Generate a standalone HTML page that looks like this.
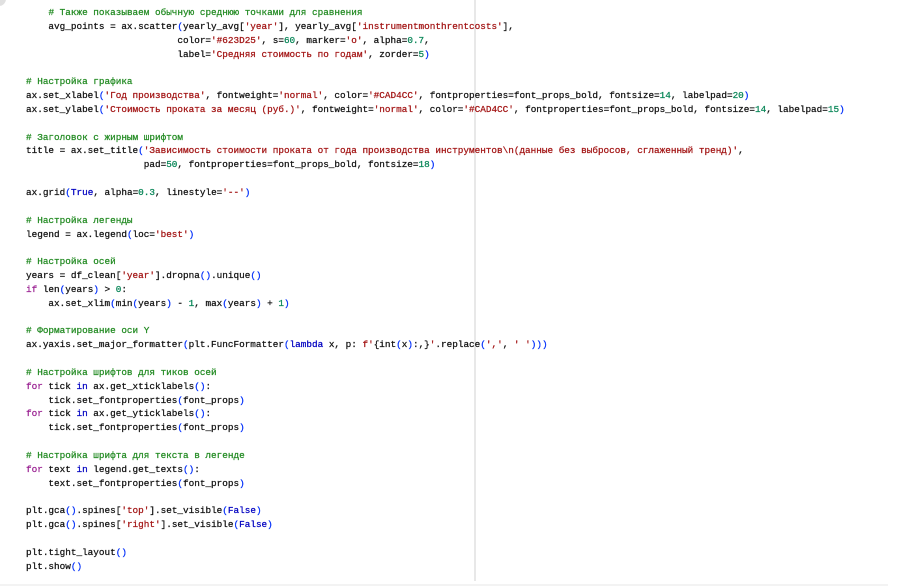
<!DOCTYPE html>
<html><head><meta charset="utf-8"><style>
html,body{margin:0;padding:0;background:#fff;width:900px;height:586px;overflow:hidden}
pre{position:absolute;left:26px;top:6px;margin:0;font-family:"Liberation Mono","DejaVu Sans Mono",monospace;font-size:9.35px;line-height:13.84px;color:#111;-webkit-text-stroke:0.25px currentColor}
.c{color:#238b23}
.s{color:#a31515}
.n{color:#098658}
.k{color:#9b2393}
.b{color:#0431fa}
.t{color:#0000c0}
.vl{position:absolute;left:474px;top:0;width:2px;height:581px;background:#e8e8e8}
.bot{position:absolute;left:0;top:584px;width:888px;height:2px;background:#f3f3f3}
.corner{position:absolute;left:-8px;top:-8px;width:14px;height:14px;border-radius:50%;background:#e0e0e0}
</style></head><body>
<div class="corner"></div>
<div class="vl"></div>
<div class="bot"></div>
<pre>    <span class="c"># Также показываем обычную среднюю точками для сравнения</span>
    avg_points = ax.scatter<span class="b">(</span>yearly_avg[<span class="s">'year'</span>], yearly_avg[<span class="s">'instrumentmonthrentcosts'</span>],
                           color=<span class="s">'#623D25'</span>, s=<span class="n">60</span>, marker=<span class="s">'o'</span>, alpha=<span class="n">0.7</span>,
                           label=<span class="s">'Средняя стоимость по годам'</span>, zorder=<span class="n">5</span><span class="b">)</span>

<span class="c"># Настройка графика</span>
ax.set_xlabel<span class="b">(</span><span class="s">'Год производства'</span>, fontweight=<span class="s">'normal'</span>, color=<span class="s">'#CAD4CC'</span>, fontproperties=font_props_bold, fontsize=<span class="n">14</span>, labelpad=<span class="n">20</span><span class="b">)</span>
ax.set_ylabel<span class="b">(</span><span class="s">'Стоимость проката за месяц (руб.)'</span>, fontweight=<span class="s">'normal'</span>, color=<span class="s">'#CAD4CC'</span>, fontproperties=font_props_bold, fontsize=<span class="n">14</span>, labelpad=<span class="n">15</span><span class="b">)</span>

<span class="c"># Заголовок с жирным шрифтом</span>
title = ax.set_title<span class="b">(</span><span class="s">'Зависимость стоимости проката от года производства инструментов\n(данные без выбросов, сглаженный тренд)'</span>,
                     pad=<span class="n">50</span>, fontproperties=font_props_bold, fontsize=<span class="n">18</span><span class="b">)</span>

ax.grid<span class="b">(</span><span class="t">True</span>, alpha=<span class="n">0.3</span>, linestyle=<span class="s">'--'</span><span class="b">)</span>

<span class="c"># Настройка легенды</span>
legend = ax.legend<span class="b">(</span>loc=<span class="s">'best'</span><span class="b">)</span>

<span class="c"># Настройка осей</span>
years = df_clean[<span class="s">'year'</span>].dropna<span class="b">()</span>.unique<span class="b">()</span>
<span class="k">if</span> len<span class="b">(</span>years<span class="b">)</span> &gt; <span class="n">0</span>:
    ax.set_xlim<span class="b">(</span>min<span class="b">(</span>years<span class="b">)</span> - <span class="n">1</span>, max<span class="b">(</span>years<span class="b">)</span> + <span class="n">1</span><span class="b">)</span>

<span class="c"># Форматирование оси Y</span>
ax.yaxis.set_major_formatter<span class="b">(</span>plt.FuncFormatter<span class="b">(</span><span class="t">lambda</span> x, p: <span class="s">f'</span>{int<span class="b">(</span>x<span class="b">)</span>:,}<span class="s">'</span>.replace<span class="b">(</span><span class="s">','</span>, <span class="s">' '</span><span class="b">)))</span>

<span class="c"># Настройка шрифтов для тиков осей</span>
<span class="k">for</span> tick <span class="t">in</span> ax.get_xticklabels<span class="b">()</span>:
    tick.set_fontproperties<span class="b">(</span>font_props<span class="b">)</span>
<span class="k">for</span> tick <span class="t">in</span> ax.get_yticklabels<span class="b">()</span>:
    tick.set_fontproperties<span class="b">(</span>font_props<span class="b">)</span>

<span class="c"># Настройка шрифта для текста в легенде</span>
<span class="k">for</span> text <span class="t">in</span> legend.get_texts<span class="b">()</span>:
    text.set_fontproperties<span class="b">(</span>font_props<span class="b">)</span>

plt.gca<span class="b">()</span>.spines[<span class="s">'top'</span>].set_visible<span class="b">(</span><span class="t">False</span><span class="b">)</span>
plt.gca<span class="b">()</span>.spines[<span class="s">'right'</span>].set_visible<span class="b">(</span><span class="t">False</span><span class="b">)</span>

plt.tight_layout<span class="b">()</span>
plt.show<span class="b">()</span></pre>
</body></html>
